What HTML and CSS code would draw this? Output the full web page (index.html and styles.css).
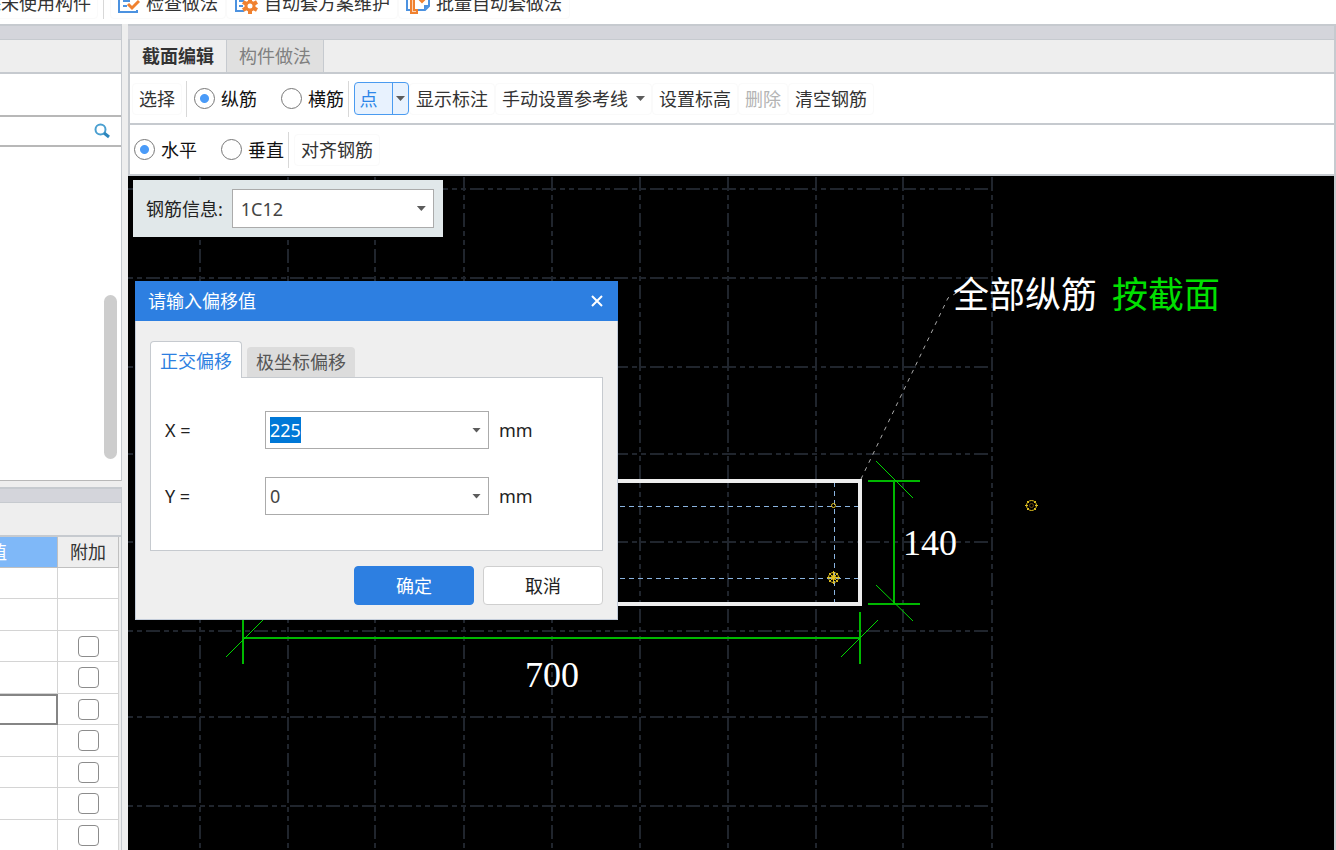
FILE: index.html
```html
<!DOCTYPE html>
<html lang="zh-CN">
<head>
<meta charset="utf-8">
<title>截面编辑</title>
<link rel="stylesheet" href="styles.css">
</head>
<body>
<div class="app">
  <header class="ribbon">
    <button class="ribbon-btn ribbon-btn-cut" type="button">除未使用构件</button>
    <span class="ribbon-sep"></span>
    <button class="ribbon-btn" type="button">
      <svg class="icon" width="22" height="22" viewBox="0 0 22 22" aria-hidden="true"><path d="M18 8V2H1v18h18v-2M5 9h7M5 14h4" fill="none" stroke="#4c92e0" stroke-width="2"/><path d="M10 12l4 4 7-7" fill="none" stroke="#f0812f" stroke-width="3"/></svg>
      检查做法</button>
    <button class="ribbon-btn" type="button">
      <svg class="icon" width="24" height="22" viewBox="0 0 24 22" aria-hidden="true"><path d="M18 6V2H2v17h8M5 9h5M5 14h4" fill="none" stroke="#4c92e0" stroke-width="2"/><path d="M16 6v4M16 18v4M9 10l3.500 2M19.500 16l3.500 2M9 18l3.500-2M19.500 12l3.500-2" stroke="#f0812f" stroke-width="4"/><circle cx="16" cy="14" r="4" fill="#fff" stroke="#f0812f" stroke-width="3"/></svg>
      自动套方案维护</button>
    <button class="ribbon-btn" type="button">
      <svg class="icon" width="24" height="22" viewBox="0 0 24 22" aria-hidden="true"><path d="M4 18H1V2M11 2h12v12l-4 4h-7" fill="none" stroke="#4c92e0" stroke-width="2"/><path d="M23 13h-5v5z" fill="#4c92e0"/><path d="M8 2H5v19h6v-3H8V2" fill="#fbd3b4" stroke="#f0812f" stroke-width="2"/><path d="M13 7l3 3 3-3" fill="none" stroke="#f0812f" stroke-width="2"/></svg>
      批量自动套做法</button>
  </header>

  <main class="workspace">
    <aside class="side">
      <section class="tree-panel">
        <div class="band"></div>
        <div class="panel-head"></div>
        <div class="tree-tools"></div>
        <div class="search">
          <button class="search-btn" type="button" aria-label="搜索"><svg width="16" height="16" viewBox="0 0 16 16" aria-hidden="true"><circle cx="6.500" cy="6.500" r="5" fill="none" stroke="#4a9fd0" stroke-width="2"/><path d="M10 10l5 4" stroke="#2d86bd" stroke-width="3"/></svg></button>
        </div>
        <div class="tree"><div class="thumb"></div></div>
      </section>
      <section class="prop-panel">
        <div class="band"></div>
        <div class="panel-head"></div>
        <table class="props">
          <thead><tr><th class="value-head">属性值</th><th>附加</th></tr></thead>
          <tbody>
            <tr><td></td><td></td></tr>
            <tr><td></td><td></td></tr>
            <tr><td></td><td><input type="checkbox" aria-label="附加"></td></tr>
            <tr><td></td><td><input type="checkbox" aria-label="附加"></td></tr>
            <tr><td class="current"></td><td><input type="checkbox" aria-label="附加"></td></tr>
            <tr><td></td><td><input type="checkbox" aria-label="附加"></td></tr>
            <tr><td></td><td><input type="checkbox" aria-label="附加"></td></tr>
            <tr><td></td><td><input type="checkbox" aria-label="附加"></td></tr>
            <tr><td></td><td><input type="checkbox" aria-label="附加"></td></tr>
          </tbody>
        </table>
      </section>
    </aside>

    <section class="editor">
      <div class="band"></div>
      <nav class="tabs">
        <button class="tab tab-active" type="button">截面编辑</button>
        <button class="tab" type="button">构件做法</button>
      </nav>
      <div class="toolbar">
        <button class="tool" type="button">选择</button>
        <span class="sep"></span>
        <div class="radios">
          <label><input type="radio" name="bar" checked>纵筋</label>
          <label><input type="radio" name="bar">横筋</label>
        </div>
        <span class="sep"></span>
        <div class="split">
          <button class="split-main" type="button">点</button>
          <button class="split-drop" type="button" aria-label="更多"><span class="arrow"></span></button>
        </div>
        <button class="tool" type="button">显示标注</button>
        <button class="tool" type="button">手动设置参考线<span class="arrow"></span></button>
        <button class="tool" type="button">设置标高</button>
        <button class="tool" type="button" disabled>删除</button>
        <button class="tool" type="button">清空钢筋</button>
      </div>
      <div class="toolbar">
        <div class="radios">
          <label><input type="radio" name="dir" checked>水平</label>
          <label><input type="radio" name="dir">垂直</label>
        </div>
        <span class="sep"></span>
        <button class="tool" type="button">对齐钢筋</button>
      </div>

      <div class="canvas">
        <svg class="drawing" width="100%" height="100%">
          <g transform="translate(-128 -176)">
            <g class="grid">
              <path d="M110 189H992M110 278H992M110 367H992M110 454H992M110 542H992M110 631H992M110 717H992M110 806H992"/>
              <path d="M200 141V860M288 141V860M375 141V860M464 141V860M552 141V860M640 141V860M728 141V860M816 141V860M903 141V860M992 141V860"/>
            </g>
            <path class="ref" d="M620 506.500H860M620 578.500H860M834.500 482V604"/>
            <path class="outline" d="M243 481H860V604H243z"/>
            <path class="leader" d="M861 479L948 298L958 292"/>
            <g class="dim">
              <path d="M868 481H920M868 604H920M894 480V604M243 612V664M860 612V664M243 638H860"/>
              <path class="tick" d="M876 461L913 498M876 585L913 621M226 657L263 620M841 657L878 620"/>
            </g>
            <g class="rebar">
              <circle cx="833.500" cy="505.500" r="2"/>
              <circle cx="833.500" cy="577.500" r="5"/><circle cx="833.500" cy="577.500" r="2"/><path d="M827 577.500h13M833.500 571v13M829 573l9 9M838 573l-9 9"/>
              <circle cx="1031.500" cy="505.500" r="5"/><path d="M1025 505.500h3M1035 505.500h3M1027 501l2 2M1036 501l-2 2M1027 510l2-2M1036 510l-2-2"/><circle class="rebar-core" cx="1031.500" cy="505.500" r="2"/>
            </g>
            <g class="cad-text">
              <text x="953" y="308">全部纵筋</text>
              <text class="green" x="1112" y="308">按截面</text>
              <text x="903" y="555">140</text>
              <text x="525" y="687">700</text>
            </g>
          </g>
        </svg>

        <div class="info">
          <label for="bar-info">钢筋信息:</label>
          <div class="combo">
            <select id="bar-info"><option>1C12</option></select>
            <span class="arrow"></span>
          </div>
        </div>

        <form class="dialog">
          <div class="title">
            <span>请输入偏移值</span>
            <button class="close" type="button" aria-label="关闭"><svg width="12" height="12" viewBox="0 0 12 12" aria-hidden="true"><path d="M1 1l10 10M11 1L1 11" stroke="#fff" stroke-width="2"/></svg></button>
          </div>
          <div class="dialog-body">
            <div class="dialog-tabs">
              <button class="dtab dtab-active" type="button">正交偏移</button>
              <button class="dtab" type="button">极坐标偏移</button>
            </div>
            <div class="pane">
              <div class="field">
                <label for="off-x">X =</label>
                <div class="combo"><input id="off-x" type="text" value="225"><span class="arrow"></span></div>
                <span>mm</span>
              </div>
              <div class="field">
                <label for="off-y">Y =</label>
                <div class="combo"><input id="off-y" type="text" value="0"><span class="arrow"></span></div>
                <span>mm</span>
              </div>
            </div>
            <div class="actions">
              <button class="btn btn-primary" type="submit">确定</button>
              <button class="btn" type="button">取消</button>
            </div>
          </div>
        </form>
      </div>
    </section>
  </main>
</div>
<script src="main.js"></script>
</body>
</html>
```
FILE: styles.css
```css
* { box-sizing: border-box; }

body {
  margin: 0;
  font: 18px/26px "Noto Sans", "Noto Sans CJK SC", sans-serif;
  color: #333;
}

button, input, select { font: inherit; color: inherit; margin: 0; }
button { background: none; border: 0; padding: 0; white-space: nowrap; }

.app {
  height: 100vh;
  display: flex;
  flex-direction: column;
  overflow: hidden;
  background: #eee;
}

/* ribbon */
.ribbon {
  flex: none;
  height: 24px;
  display: flex;
  align-items: flex-end;
  padding-bottom: 5px;
  background: #fff;
  overflow: hidden;
}
.ribbon-btn {
  display: flex;
  align-items: center;
  gap: 6px;
  height: 32px;
  padding: 0 7px;
  border: 1px solid #fafafa;
  border-radius: 4px;
}
.ribbon-btn-cut { margin-left: -24px; padding: 0 6px; }
.ribbon-sep { width: 1px; height: 32px; margin: 0 6px 0 5px; background: #d8d8d8; }

/* workspace */
.workspace {
  flex: 1;
  min-height: 0;
  display: grid;
  grid-template-columns: 122px minmax(0, 1fr);
  gap: 6px;
}
.band {
  flex: none;
  height: 16px;
  background: #d4d5db;
  border-top: 2px solid #c6cacf;
  border-bottom: 1px solid #c6cacf;
}
.panel-head {
  flex: none;
  height: 34px;
  border-bottom: 2px solid #c6cacf;
}

.side { display: flex; flex-direction: column; gap: 6px; min-height: 0; }
.tree-panel, .prop-panel {
  display: flex;
  flex-direction: column;
  border-right: 1px solid #c6cacf;
}
.tree-panel { flex: none; border-bottom: 1px solid #b8b8b8; }
.prop-panel { flex: 1; min-height: 0; overflow: hidden; }
.tree-tools { height: 43px; background: #fff; border-bottom: 2px solid #b8b8b8; }
.search {
  height: 30px;
  display: flex;
  align-items: center;
  justify-content: flex-end;
  padding-right: 11px;
  background: #fff;
  border-bottom: 2px solid #b8b8b8;
}
.search-btn { display: flex; }
.tree { height: 333px; padding: 148px 4px 0 0; background: #fff; }
.thumb { width: 13px; height: 164px; margin-left: auto; border-radius: 7px; background: #cdcdcd; }

.props {
  width: 119px;
  border-collapse: separate;
  border-spacing: 0;
  table-layout: fixed;
  background: #fff;
}
.props th {
  height: 31px;
  padding: 0;
  font-weight: 400;
  background: #eee;
  border-right: 1px solid #c0c0c0;
  border-bottom: 1px solid #c0c0c0;
}
.props .value-head {
  width: 58px;
  overflow: hidden;
  direction: rtl;
  padding-right: 51px;
  white-space: nowrap;
  color: #fff;
  background: #7fb8f8;
}
.props td {
  height: 31px;
  padding: 0;
  text-align: center;
  border-right: 1px solid #d4d4d4;
  border-bottom: 1px solid #d4d4d4;
}
.props tr:nth-child(even) td { height: 32px; }
.props .current {
  border-color: #858585;
  box-shadow: inset -1px -1px #858585, inset 0 2px #858585;
}
.props input {
  appearance: none;
  display: block;
  width: 21px;
  height: 21px;
  margin: 0 auto;
  border: 1px solid #8c8c8c;
  border-radius: 4px;
  background: #fff;
}

/* editor */
.editor {
  display: flex;
  flex-direction: column;
  min-width: 0;
  min-height: 0;
  border-right: 2px solid #c6cacf;
}
.tabs {
  flex: none;
  display: flex;
  height: 34px;
  border-left: 2px solid #c6cacf;
  border-bottom: 2px solid #c6cacf;
}
.tab {
  padding: 0 12px;
  color: #808080;
  background: #e0e0e0;
  border-right: 1px solid #c6cacf;
}
.tab-active { font-weight: 700; color: #333; background: #eee; }

.toolbar {
  flex: none;
  display: flex;
  align-items: center;
  height: 51px;
  padding-left: 2px;
  background: #fff;
  border-left: 2px solid #c6cacf;
  border-bottom: 2px solid #c6cacf;
}
.tool {
  display: flex;
  align-items: center;
  gap: 8px;
  height: 32px;
  padding: 0 6px;
  border: 1px solid #fafafa;
  border-radius: 4px;
}
.tool:disabled { color: #b4b4b4; }
.sep { width: 1px; height: 36px; margin: 0 5px 0 4px; background: #d8d8d8; }
.radios { display: flex; gap: 24px; padding-left: 2px; color: #111; }
.radios label { display: flex; align-items: center; gap: 6px; }
.radios input {
  appearance: none;
  width: 21px;
  height: 21px;
  border: 1px solid #777;
  border-radius: 50%;
  background: #fff;
}
.radios input:checked { background: radial-gradient(circle, #4a9bf8 0 4px, #fff 5px); }
.arrow {
  flex: none;
  width: 9px;
  height: 5px;
  background: #5c5c5c;
  clip-path: polygon(0 0, 100% 0, 50% 100%);
}
.split {
  display: flex;
  height: 33px;
  border: 1px solid #4a9bf0;
  border-radius: 4px;
  background: #e8f2fe;
}
.split-main { width: 37px; padding: 0 14px 0 4px; color: #2d86e8; }
.split-drop {
  display: flex;
  align-items: center;
  justify-content: center;
  width: 16px;
  border-left: 1px solid #4a9bf0;
}

/* canvas */
.canvas {
  flex: 1;
  min-height: 0;
  position: relative;
  overflow: hidden;
  background: #000;
}
.drawing { position: absolute; inset: 0; }
.grid { fill: none; stroke: #20252d; stroke-width: 2; stroke-dasharray: 14 4 5 4 5 4; }
.ref { fill: none; stroke: #8ab4e0; stroke-width: 1; stroke-dasharray: 5 4; }
.outline { fill: none; stroke: #eee; stroke-width: 4; }
.leader { fill: none; stroke: #aaa; stroke-width: 1; stroke-dasharray: 4 5; }
.dim { fill: none; stroke: #00b800; stroke-width: 2; }
.dim .tick { stroke: #00d800; stroke-width: 1; }
.rebar { fill: none; stroke: #e0c020; stroke-width: 1; }
.rebar .rebar-core { stroke: #6b4a10; }
.cad-text {
  font: 36px "Liberation Serif", "Noto Sans CJK SC", serif;
  fill: #fff;
}
.cad-text .green { fill: #00e000; }

.info {
  position: absolute;
  top: 4px;
  left: 5px;
  display: flex;
  align-items: center;
  gap: 9px;
  padding: 9px 9px 9px 13px;
  color: #222;
  background: #e1e8ea;
}
.combo {
  display: flex;
  align-items: center;
  padding-right: 7px;
  background: #fff;
  border: 1px solid #ababab;
}
.combo select, .combo input {
  appearance: none;
  flex: 1;
  min-width: 0;
  padding: 0;
  border: 0;
  outline: 0;
  background: transparent;
  color: #444;
  height: 26px;
}
.combo ::selection { color: #fff; background: #0078d7; }
.info .combo { width: 202px; height: 39px; padding-left: 8px; }

.dialog {
  position: absolute;
  top: 105px;
  left: 7px;
  width: 483px;
  background: #efefef;
}
.title {
  display: flex;
  align-items: center;
  justify-content: space-between;
  height: 40px;
  padding: 0 15px 0 13px;
  color: #fff;
  background: #2d7fe1;
}
.close { display: flex; }
.dialog-body {
  padding: 20px 14px 14px;
  border: 1px solid #c4cdda;
  border-top: 0;
}
.dialog-tabs { display: flex; align-items: flex-end; gap: 5px; }
.dtab {
  height: 30px;
  padding: 0 9px;
  color: #555;
  background: #dcdcdc;
  border-radius: 4px 4px 0 0;
}
.dtab-active {
  height: 37px;
  margin-bottom: -1px;
  padding-top: 2px;
  border: 1px solid #c6cacf;
  border-bottom: 0;
  color: #2d7fe1;
  background: #fff;
  z-index: 1;
}
.pane {
  display: flex;
  flex-direction: column;
  gap: 28px;
  padding: 33px 14px 35px;
  background: #fff;
  border: 1px solid #c6cacf;
}
.field {
  display: grid;
  grid-template-columns: 90px 224px auto;
  column-gap: 10px;
  align-items: center;
  color: #222;
}
.field .combo { height: 38px; padding-left: 4px; }
.actions { display: flex; justify-content: flex-end; gap: 9px; padding-top: 15px; }
.btn {
  width: 120px;
  height: 39px;
  color: #222;
  background: #fff;
  border: 1px solid #cfcfcf;
  border-radius: 4px;
}
.btn-primary { color: #fff; background: #2d7fe1; border-color: #2d7fe1; }
```
FILE: main.js
```js
const offsetX = document.getElementById("off-x");
offsetX.focus();
offsetX.select();
```
